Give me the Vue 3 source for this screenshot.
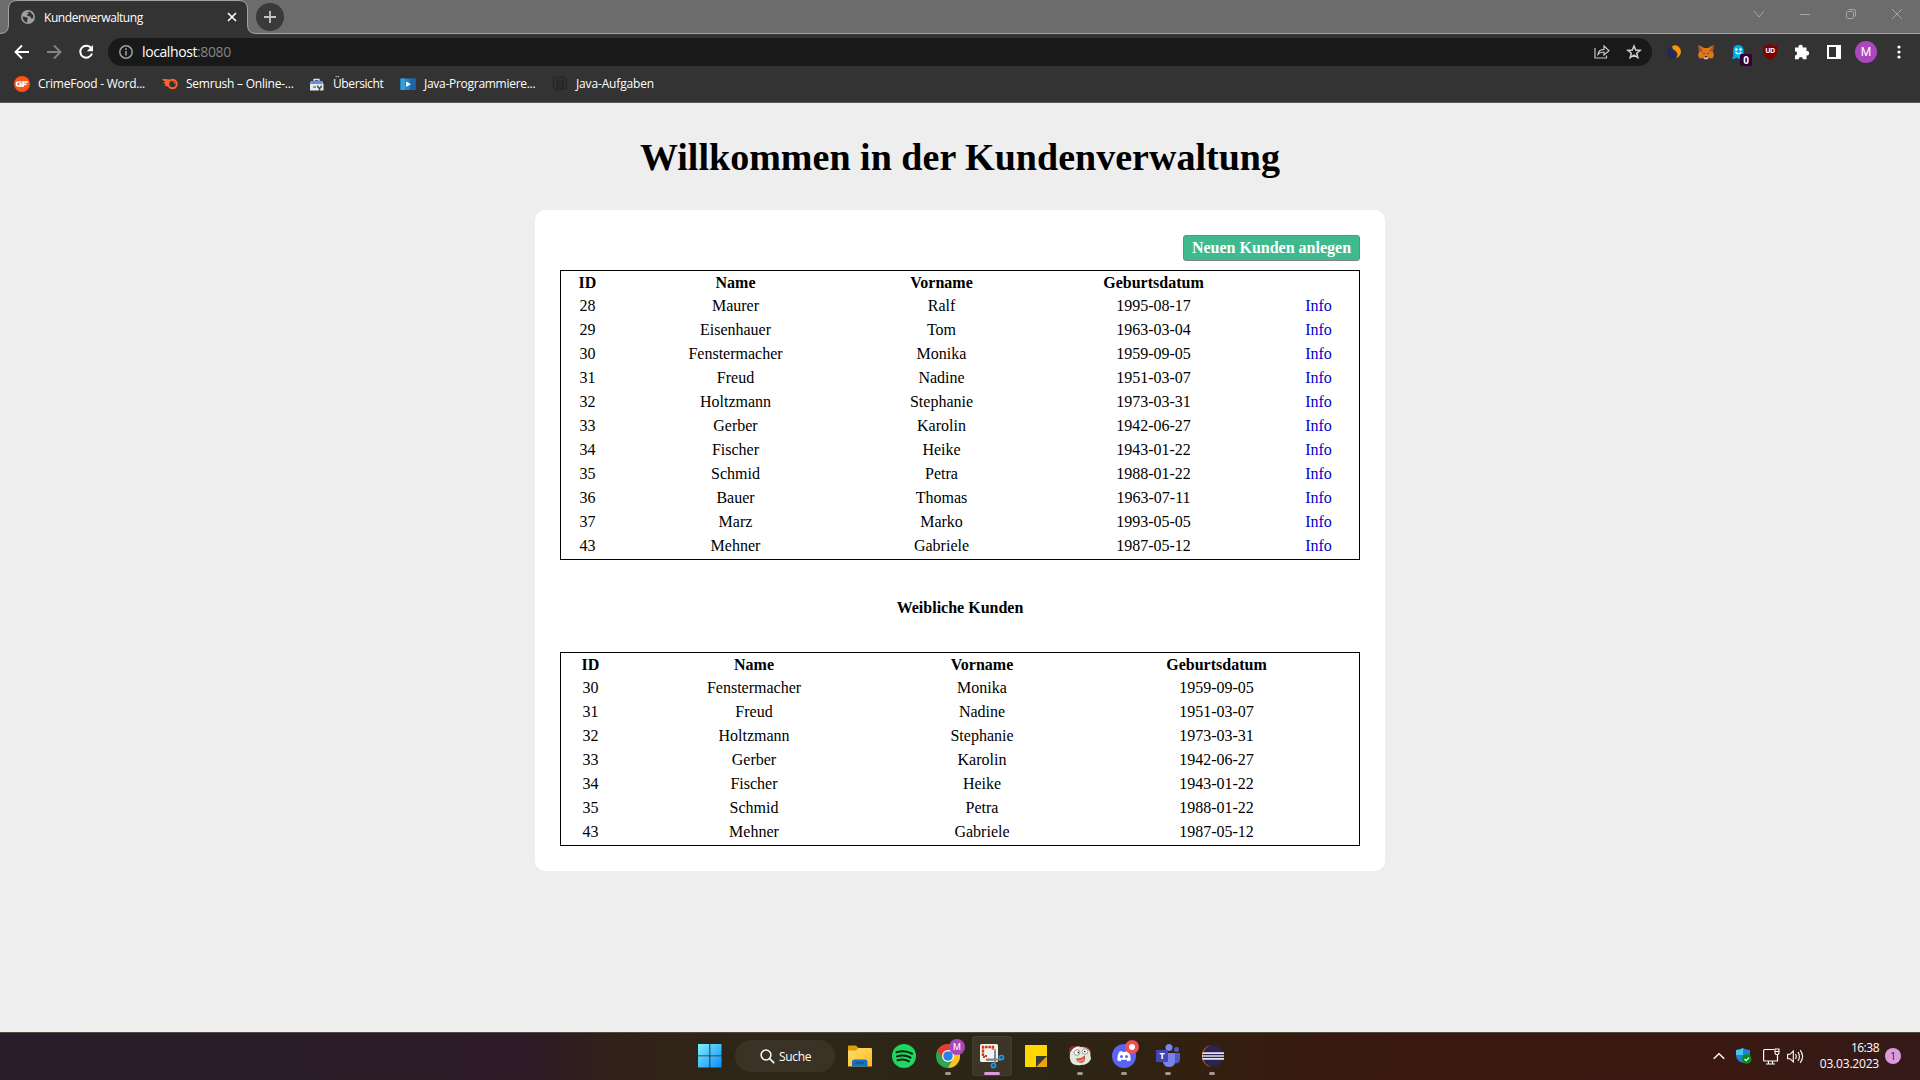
<script setup>
const bookmarks = [
  { id: 'crime', text: 'CrimeFood - Word...' },
  { id: 'sem', text: 'Semrush – Online-...' },
  { id: 'over', text: 'Übersicht' },
  { id: 'prog', text: 'Java-Programmiere...' },
  { id: 'task', text: 'Java-Aufgaben' },
]
const customers = [
  [28, 'Maurer', 'Ralf', '1995-08-17'],
  [29, 'Eisenhauer', 'Tom', '1963-03-04'],
  [30, 'Fenstermacher', 'Monika', '1959-09-05'],
  [31, 'Freud', 'Nadine', '1951-03-07'],
  [32, 'Holtzmann', 'Stephanie', '1973-03-31'],
  [33, 'Gerber', 'Karolin', '1942-06-27'],
  [34, 'Fischer', 'Heike', '1943-01-22'],
  [35, 'Schmid', 'Petra', '1988-01-22'],
  [36, 'Bauer', 'Thomas', '1963-07-11'],
  [37, 'Marz', 'Marko', '1993-05-05'],
  [43, 'Mehner', 'Gabriele', '1987-05-12'],
]
const femaleIds = [30, 31, 32, 33, 34, 35, 43]
const female = customers.filter((c) => femaleIds.includes(c[0]))
</script>

<template>
  <div class="screen">
    <header class="browser">
      <div class="tabstrip">
        <svg class="tabshape" width="256" height="34" viewBox="0 0 256 34">
          <path d="M0 34V33.500Q8.500 33.500 8.500 25V9Q8.500 .5 17 .5H239Q247.500 .5 247.500 9V25Q247.500 33.500 256 33.500V34Z" fill="#333" />
          <path d="M0 33.500Q8.500 33.500 8.500 25V9Q8.500 .5 17 .5H239Q247.500 .5 247.500 9V25Q247.500 33.500 256 33.500" fill="none" stroke="#a2a4a3" />
        </svg>
        <div class="tab">
          <svg width="14" height="14" viewBox="0 0 14 14">
            <circle cx="7" cy="7" r="7" fill="#9aa0a6" />
            <path d="M1.500 6.500 5 7 7 8.500 6 10 6.500 12.500Q2 12 1.500 6.500ZM6 2 9 1.800 12 5 12.500 8 10 8.500 9.500 6.500 6.500 6 6 4.500 8 3.500Z" fill="#333" />
          </svg>
          <span class="tabtitle">Kundenverwaltung</span>
          <svg width="10" height="10" viewBox="0 0 10 10"><path d="m1 1 8 8M9 1 1 9" stroke="#fff" stroke-width="1.600" /></svg>
        </div>
        <div class="newtab">
          <svg width="12" height="12" viewBox="0 0 12 12"><path d="M6 0V12M0 6H12" stroke="#c4c4c4" stroke-width="1.800" /></svg>
        </div>
        <div class="winctl">
          <svg width="12" height="12" viewBox="0 0 12 12"><path d="m1 3 5 6 5-6" fill="none" stroke="#a6a6a6" /></svg>
          <svg width="12" height="12" viewBox="0 0 12 12"><path d="M1 6.500H11" stroke="#a6a6a6" /></svg>
          <svg width="12" height="12" viewBox="0 0 12 12"><path d="M1.500 4.500Q1.500 3.500 2.500 3.500H7.500Q8.500 3.500 8.500 4.500V9.500Q8.500 10.500 7.500 10.500H2.500Q1.500 10.500 1.500 9.500ZM3.500 1.500H9Q10.500 1.500 10.500 3V8.500" fill="none" stroke="#a6a6a6" /></svg>
          <svg width="12" height="12" viewBox="0 0 12 12"><path d="m1 1 10 10M11 1 1 11" stroke="#a6a6a6" /></svg>
        </div>
      </div>
      <div class="toolbar">
        <div class="nav">
          <svg width="16" height="16" viewBox="0 0 16 16"><path d="M15 8H2M8 1.500 1.500 8 8 14.500" fill="none" stroke="#fff" stroke-width="1.900" /></svg>
          <svg width="16" height="16" viewBox="0 0 16 16"><path d="M1 8H14M8 1.500 14.500 8 8 14.500" fill="none" stroke="#858585" stroke-width="1.900" /></svg>
          <svg width="16" height="16" viewBox="0 0 16 16"><path d="M13.200 4.200A6 6 0 1 0 14 9.500" fill="none" stroke="#fff" stroke-width="2" /><path d="M15 1V7.200H8.800Z" fill="#fff" /></svg>
        </div>
        <div class="omnibox">
          <svg width="14" height="14" viewBox="0 0 14 14"><circle cx="7" cy="7" r="6.200" fill="none" stroke="#9aa0a6" stroke-width="1.500" /><path d="M7 6V10.600M7 3.300V4.900" stroke="#9aa0a6" stroke-width="1.600" /></svg>
          <span class="url">localhost<i>:8080</i></span>
          <svg class="share" width="16" height="16" viewBox="0 0 16 16"><path d="M1 4V14H12.500V11.500M4 10.500Q4.500 5.500 10 5.300V2L15 6.700 10 11V8Q6 8 4 10.500Z" fill="none" stroke="#c4c4c4" stroke-width="1.200" /></svg>
          <svg width="16" height="16" viewBox="0 0 16 16"><path d="M8 2 9.700 6.100 14.100 6.400 10.700 9.300 11.800 13.600 8 11.200 4.200 13.600 5.300 9.300 1.900 6.400 6.300 6.100Z" fill="none" stroke="#d0d0d0" stroke-width="1.500" /></svg>
        </div>
        <div class="ext">
          <svg width="16" height="16" viewBox="0 0 16 16"><path d="M6 2A7 7 0 0 0 9.500 13.500Q8 15 5 13.800A6.500 6.500 0 0 1 6 2Z" fill="#1f2a5c" /><path d="M3 3Q6 6 8 8T8.500 13.800Q2 14.500 1.300 9 1 5 3 3Z" fill="#1f2a5c" /><path d="M6 2.500Q9 0 12.500 2.500 16 6 14.500 10 13 13.500 10 14 13.500 9 9 6.500 6 4.500 6 2.500Z" fill="#ff9500" /></svg>
          <svg width="16" height="16" viewBox="0 0 16 16"><path d="M.5 1 6 4H10L15.500 1 15 8 16 11 14.500 14.500 11 14 9.500 15.500H6.500L5 14 1.500 14.500 0 11 1 8Z" fill="#e2761b" /><path d="m.5 1 4.500 6L1 8ZM15.500 1 11 7l4 1Z" fill="#a85420" /><path d="M6.500 12.500H9.500L9.800 15H6.200Z" fill="#d7c1b3" /><path d="m4 8.500 2.500.5.300 1.300ZM12 8.500 9.500 9l-.3 1.300Z" fill="#243447" /><path d="M6.800 12H9.200V13.200H6.800Z" fill="#222" /></svg>
          <div class="ghost">
            <svg width="16" height="16" viewBox="0 0 16 16"><path d="M2 15Q4 13 3 7 3 1 8 1 13.500 1 13.500 7V15L11 13.500 9 15 6.500 13.500 4 15Z" fill="#00aef0" /><circle cx="6.300" cy="5.500" r="1.200" fill="#fff" /><circle cx="10.500" cy="5.500" r="1.200" fill="#fff" /><path d="M5.500 8Q8.400 11.500 11.300 8" fill="none" stroke="#fff" stroke-width="1.200" /></svg>
            <b>0</b>
          </div>
          <div class="ublock">
            <svg width="16" height="16" viewBox="0 0 16 16"><path d="M8 0Q11 2 15 2V7Q15 13 8 16 1 13 1 7V2Q5 2 8 0Z" fill="#800000" /></svg>
            <b>UD</b>
          </div>
          <svg width="16" height="16" viewBox="0 0 16 16"><path d="M1 3.500H4.500A2.200 2.200 0 1 1 8.700 3.500H12.500V7A2.200 2.200 0 1 1 12.500 11.300V15.200H8.900A2.100 2.100 0 0 0 4.700 15.200H1V11.500A2.100 2.100 0 0 0 1 7.300Z" fill="#fff" /></svg>
          <svg width="16" height="16" viewBox="0 0 16 16"><path d="M1 1H15V15H1ZM3 3V13H10V3Z" fill="#fff" fill-rule="evenodd" /></svg>
          <div class="avatar">M</div>
          <svg class="dots" width="4" height="14" viewBox="0 0 4 14"><g fill="#fff"><circle cx="2" cy="2" r="1.600" /><circle cx="2" cy="7" r="1.600" /><circle cx="2" cy="12" r="1.600" /></g></svg>
        </div>
      </div>
      <nav class="bookmarks">
        <a v-for="b in bookmarks" :key="b.id" :class="'bm ' + b.id">
          <svg v-if="b.id === 'crime'" width="16" height="16" viewBox="0 0 16 16"><circle cx="8" cy="8" r="8" fill="#ff5417" /><path d="M7.500 6H4Q2.500 6 2.500 8T4 10.200H7V8.200H5M9 11V8.300H12.500M9 8V6H14" fill="none" stroke="#fff" stroke-width="1.700" /></svg>
          <svg v-else-if="b.id === 'sem'" width="16" height="16" viewBox="0 0 16 16"><path d="M0 3Q6 2.500 9 4L7 6 8 9 6 10.500Q3 10 2 9L4 8.500 1 6.500 4 6Q1 5 0 3Z" fill="#ff642d" /><circle cx="10.500" cy="8" r="4.200" fill="#333" stroke="#ff642d" stroke-width="2" /><path d="M10.500 5.500Q13 5.500 13 8" fill="none" stroke="#ff642d" stroke-width="1" /></svg>
          <svg v-else-if="b.id === 'over'" width="16" height="16" viewBox="0 0 16 16"><path d="M5 5V3.500H10V5" fill="none" stroke="#dfe3e8" stroke-width="1.300" /><path d="M2 5H13L14.500 8.500V14.500H1V8.500Z" fill="#e8eaed" /><path d="M2.500 5H12.500L13.500 8H1.500Z" fill="#5690f5" /><path d="M4 11H7" stroke="#555" stroke-width="1.200" /><path d="M8.800 9.500V11L10.500 12.500 12.200 11V9.500M10.500 12.500V15" fill="none" stroke="#444" stroke-width="1.400" /></svg>
          <svg v-else-if="b.id === 'prog'" width="16" height="16" viewBox="0 0 16 16"><path d="M.5 2.500H15.500V14H.5Z" fill="#2185c9" /><path d="M.5 2.500H5V14H.5Z" fill="#2fa2dd" /><path d="M10 2.500H15.500V14H10Z" fill="#1a65a8" /><path d="M6 5.500V11L11 8.200Z" fill="#fff" /></svg>
          <svg v-else width="16" height="16" viewBox="0 0 16 16"><path d="M1.500 1.500 11 1 14.500 3.500V12L5 14.500 1.500 11ZM4.500 4H11.500V11.500L5.500 12ZM7 6H10V9.500H7Z" fill="none" stroke="#242424" stroke-width="1.200" /></svg>
          <span>{{ b.text }}</span>
        </a>
      </nav>
    </header>

    <main class="page">
      <h1>Willkommen in der Kundenverwaltung</h1>
      <section class="card">
        <button class="new">Neuen Kunden anlegen</button>
        <table>
          <colgroup><col class="a1"><col class="a2"><col class="a3"><col class="a4"><col class="a5"></colgroup>
          <thead><tr><th>ID</th><th>Name</th><th>Vorname</th><th>Geburtsdatum</th><th></th></tr></thead>
          <tbody>
            <tr v-for="c in customers" :key="c[0]"><td v-for="(v, i) in c" :key="i">{{ v }}</td><td class="link"><a href="#">Info</a></td></tr>
          </tbody>
        </table>
        <h4>Weibliche Kunden</h4>
        <table>
          <colgroup><col class="f1"><col class="f2"><col class="f3"><col class="f4"></colgroup>
          <thead><tr><th>ID</th><th>Name</th><th>Vorname</th><th class="last">Geburtsdatum</th></tr></thead>
          <tbody>
            <tr v-for="c in female" :key="c[0]"><td v-for="(v, i) in c" :key="i" :class="{ last: i === 3 }">{{ v }}</td></tr>
          </tbody>
        </table>
      </section>
    </main>

    <footer class="taskbar">
      <div class="side"></div>
      <div class="apps">
        <div class="app start">
          <svg width="24" height="24" viewBox="0 0 24 24"><defs><linearGradient id="win" x1="0" y1="0" x2="1" y2="1"><stop offset="0" stop-color="#7df0ff" /><stop offset="1" stop-color="#0a8df5" /></linearGradient></defs><path d="M0 0H11.400V11.400H0ZM12.300 0H23.500V11.400H12.300ZM0 12.300H11.400V23.500H0ZM12.300 12.300H23.500V23.500H12.300Z" fill="url(#win)" /></svg>
        </div>
        <div class="search">
          <svg width="15" height="15" viewBox="0 0 15 15"><circle cx="6" cy="6" r="4.900" fill="none" stroke="#fff" stroke-width="1.500" /><path d="m9.500 9.500 4.700 4.700" stroke="#fff" stroke-width="1.700" /></svg>
          <span>Suche</span>
        </div>
        <div class="app">
          <svg width="24" height="24" viewBox="0 0 24 24"><defs><linearGradient id="fold" x1="0" y1="0" x2="1" y2="1"><stop offset="0" stop-color="#ffdc6b" /><stop offset="1" stop-color="#fdbc22" /></linearGradient></defs><path d="M0 2.500Q0 1.500 1 1.500H8L10.500 4H22V9H0Z" fill="#e29b0a" /><path d="M0 6.500H8L10.500 4H23Q24 4 24 5V22.500H0Z" fill="url(#fold)" /><path d="M4 22.500V18Q4 15.500 6.500 15.500H17Q19.500 15.500 19.500 18V22.500Z" fill="#1272c4" /><path d="M7.500 18.800H16" stroke="#0b4f95" stroke-width="1.300" /></svg>
        </div>
        <div class="app">
          <svg width="24" height="24" viewBox="0 0 24 24"><circle cx="12" cy="12" r="12" fill="#1ed760" /><path d="M4.500 8.200Q13 5.700 20 9.700M5 12.400Q12.500 10.200 18.600 13.600M5.500 16.300Q12 14.500 17 17.300" fill="none" stroke="#15210f" stroke-width="2" stroke-linecap="round" /></svg>
        </div>
        <div class="app">
          <svg width="24" height="24" viewBox="0 0 24 24"><circle cx="12" cy="12" r="12" fill="#2ea64b" /><path d="M1.600 6A12 12 0 0 1 22.400 6L12 6 7 15Z" fill="#e63b32" /><path d="M22.400 6A12 12 0 0 1 12 24L17.200 14.800 12 6Z" fill="#fcc31c" /><circle cx="12" cy="12" r="6" fill="#fff" /><circle cx="12" cy="12" r="4.800" fill="#2f7de8" /></svg>
          <em class="profile">M</em><u></u>
        </div>
        <div class="app active">
          <svg width="26" height="26" viewBox="0 0 26 26"><rect x="1" y="1" width="18" height="18" rx="1.500" fill="#f1f3f5" /><path d="M4 13V4H14V7" fill="none" stroke="#d83b01" stroke-width="2.400" stroke-dasharray="2.800 .8" /><path d="M4 14H6M6 13H8" stroke="#d83b01" stroke-width="2" /><path d="M16 6V17H7" fill="none" stroke="#9aa1a8" stroke-width="2" /><path d="M16 8V20M7 16.500H22" stroke="#7c858e" stroke-width="1.800" /><circle cx="22.500" cy="14.500" r="2" fill="#333" stroke="#1b9de2" stroke-width="1.700" /><circle cx="14.500" cy="22.500" r="2" fill="#333" stroke="#1b9de2" stroke-width="1.700" /></svg>
          <u class="wide"></u>
        </div>
        <div class="app">
          <svg width="22" height="22" viewBox="0 0 22 22"><path d="M0 0H22V11L11 22H0Z" fill="#ffd800" /><path d="M11 22 22 11V22Z" fill="#f0a30a" /><path d="M11 11H22L11 22Z" fill="#3b3b3b" /></svg>
        </div>
        <div class="app">
          <svg width="24" height="24" viewBox="0 0 24 24"><path d="M1 9Q0 3 5 2L20 3Q24 6 23 10Z" fill="#8e2d22" /><path d="M2 9Q4 3 12 3 20 3 22 8L23 15Q20 21 13 21 6 22 3 18 1 14 2 9Z" fill="#dfeadc" /><path d="M4 7Q6 2 12 2.500L7 7Z" fill="#fff" /><circle cx="9" cy="8.500" r="2.800" fill="#fff" stroke="#8b807a" stroke-width=".8" /><circle cx="17" cy="7.500" r="2.800" fill="#fff" stroke="#8b807a" stroke-width=".8" /><path d="M9.500 8.500H11M16 7.500H17.500" stroke="#333" stroke-width="1.500" /><path d="M8 14.500Q13 15 17 11.500 18 18 13 19 9 18.500 8 14.500Z" fill="#d94843" /><path d="M10 16.500Q13 18 15.500 15" fill="none" stroke="#f39a90" stroke-width="1.500" /></svg>
          <u></u>
        </div>
        <div class="app">
          <svg width="24" height="24" viewBox="0 0 24 24"><circle cx="12" cy="12" r="12" fill="#5865f2" /><path d="M7.500 7.500 10 7 10.500 8H13.500L14 7 16.500 7.500Q19 11 18.800 16 17 17.300 15.500 17.200L14.500 15.800H9.500L8.500 17.200Q7 17.300 5.200 16 5 11 7.500 7.500Z" fill="#fff" /><circle cx="9.500" cy="12.500" r="1.500" fill="#5865f2" /><circle cx="14.500" cy="12.500" r="1.500" fill="#5865f2" /></svg>
          <em class="alert"></em><u></u>
        </div>
        <div class="app teams">
          <svg width="24" height="24" viewBox="0 0 24 24"><circle cx="20.500" cy="5.500" r="2.500" fill="#5059c9" /><circle cx="13" cy="3.500" r="3.500" fill="#7b83eb" /><path d="M16 9H24V15Q24 19 20 19.500L16 19Z" fill="#5059c9" /><path d="M8 9H19V17Q19 23 13 23 8 23 7 18Z" fill="#7b83eb" /><rect y="6" width="12" height="12" rx="1" fill="#4048b5" /></svg>
          <b>T</b><u></u>
        </div>
        <div class="app">
          <svg width="24" height="24" viewBox="0 0 24 24"><path d="M11 1A11.200 11.200 0 0 0 11 23Q3 20 3 12T11 1Z" fill="#f7941e" /><circle cx="13" cy="12" r="10.500" fill="#2c2255" /><path d="M2.500 9.200H24M2 12H24M2.500 14.800H24" stroke="#e5e5ee" stroke-width="1.700" /></svg>
          <u></u>
        </div>
      </div>
      <div class="side tray">
        <svg width="12" height="8" viewBox="0 0 12 8"><path d="m.7 6.700 5.300-5 5.300 5" fill="none" stroke="#fff" stroke-width="1.400" /></svg>
        <svg class="shield" width="16" height="16" viewBox="0 0 16 16"><path d="M7 0Q10 2 14 2V7Q14 13 7 15 0 13 0 7V2Q4 2 7 0Z" fill="#1786d8" /><path d="M7 0V7H0V2Q4 2 7 0Z" fill="#49c3f2" /><circle cx="10.700" cy="11" r="4.800" fill="#0d8a1c" /><path d="m8.500 11 1.600 1.600 3-3" fill="none" stroke="#fff" stroke-width="1.200" /></svg>
        <svg class="net" width="17" height="17" viewBox="0 0 17 17"><path d="M11 1.500H1.500Q.6 1.500 .6 2.500V12Q.6 13 1.500 13H14.500V8M5.500 13V16M9.500 13V16M3 16H12" fill="none" stroke="#fff" stroke-width="1.200" /><path d="M12 1H16V5L15 6.500H13L12 5ZM12 3.500H16M14.500 6V9" fill="none" stroke="#fff" stroke-width="1.100" /></svg>
        <svg class="vol" width="17" height="15" viewBox="0 0 17 15"><path d="M.6 5.300H3L6.300 2V13L3 9.700H.6Z" fill="none" stroke="#fff" stroke-width="1.100" /><path d="M8.500 5Q10 7.500 8.500 10M11 3Q13.800 7.500 11 12M13.200 1.200Q18 7.500 13.200 13.800" fill="none" stroke="#fff" stroke-width="1.100" /></svg>
        <div class="clock"><span class="time">16:38</span><span>03.03.2023</span></div>
        <div class="count">1</div>
      </div>
    </footer>
  </div>
</template>

<style>
body { margin: 0; overflow: hidden; }
</style>

<style scoped>
* { box-sizing: border-box; }
svg { display: block; flex: none; }
.screen { width: 1920px; height: 1080px; display: flex; flex-direction: column; background: #eee; font: 12px "Open Sans", sans-serif; color: #fff; overflow: hidden; }
.browser { height: 103px; background: #333; border-bottom: 1px solid #5c5c5c; flex: none; }
.tabstrip { height: 34px; background: #6c6c6c; display: flex; align-items: flex-start; position: relative; box-shadow: inset 0 -1px #a2a4a3; }
.tabshape { position: absolute; left: 0; top: 0; }
.tab { position: relative; width: 256px; height: 34px; display: flex; align-items: center; padding: 0 19px 0 21px; }
.tabtitle { flex: 1; margin-left: 9px; letter-spacing: -0.43px; white-space: nowrap; }
.newtab { width: 28px; height: 28px; margin-top: 3px; border-radius: 50%; background: #3a3a3a; display: flex; align-items: center; justify-content: center; }
.winctl { display: flex; gap: 34px; margin-left: auto; margin-right: 17px; padding-top: 8px; }
.toolbar { height: 36px; display: flex; align-items: center; }
.nav { display: flex; gap: 16px; padding-left: 14px; width: 108px; }
.omnibox { width: 1544px; height: 28px; border-radius: 14px; background: #191919; display: flex; align-items: center; padding: 0 10px 0 11px; }
.url { margin-left: 9px; font-size: 14px; letter-spacing: -0.4px; line-height: 20px; }
.url i { font-style: normal; color: #858585; }
.share { margin-left: auto; margin-right: 16px; }
.ext { flex: 1; display: flex; align-items: center; gap: 16px; padding-left: 14px; }
.ghost, .ublock { position: relative; }
.ghost b { position: absolute; left: 10px; top: 10px; width: 12px; height: 12px; border-radius: 2px; background: #320033; font-size: 10px; line-height: 12px; text-align: center; }
.ublock b { position: absolute; left: 0; top: 0; width: 16px; font-size: 7px; line-height: 14px; letter-spacing: -0.4px; text-align: center; }
.avatar { width: 22px; height: 22px; margin-left: -3px; border-radius: 50%; background: #ab47bc; text-align: center; line-height: 22px; font-family: Roboto, sans-serif; font-size: 12px; }
.dots { margin-left: 4px; }
.bookmarks { height: 32px; display: flex; align-items: center; padding: 0 14px; margin-top: -2px; }
.bm { display: flex; align-items: center; white-space: nowrap; height: 24px; }
.bm span { margin-left: 8px; margin-top: -1px; letter-spacing: -0.23px; }
.bm.crime { width: 148px; }
.bm.sem { width: 147px; }
.bm.over { width: 91px; }
.bm.over span { letter-spacing: -0.4px; }
.bm.prog { width: 152px; }
.bm.prog span { letter-spacing: -0.28px; }
.bm.task span { letter-spacing: -0.15px; }
.page { height: 929px; flex: none; display: flex; flex-direction: column; align-items: center; font-family: "Liberation Serif", serif; font-size: 16px; color: #000; }
h1 { margin: 31px 0 30px; font-size: 38px; line-height: 46px; letter-spacing: 0.02px; white-space: nowrap; }
.card { width: 850px; height: 661px; border-radius: 10px; background: #fff; padding: 25px; }
.new { display: block; margin: 0 0 9px auto; width: 177px; height: 26px; border: 1px solid #808080; border-radius: 3px; background: #3dbb8f; color: #fff; font: bold 16px/22px "Liberation Serif", serif; padding: 0; white-space: nowrap; }
table { width: 800px; border: 1px solid #000; border-spacing: 0; table-layout: fixed; padding-bottom: 1px; text-align: center; }
th, td { padding: 0; line-height: 18px; height: 24px; }
th { height: 23px; }
td a { color: #00c; text-decoration: none; }
.link { padding-right: 3px; }
.last { padding-right: 2px; }
.a1 { width: 53px; } .a2 { width: 243px; } .a3 { width: 169px; } .a4 { width: 255px; } .a5 { width: 78px; }
.f1 { width: 59px; } .f2 { width: 268px; } .f3 { width: 188px; } .f4 { width: 283px; }
h4 { margin: 0; height: 92px; line-height: 96px; font-size: 16px; text-align: center; }
.taskbar { height: 48px; flex: none; display: flex; border-top: 1px solid #514a44; background: linear-gradient(90deg, #271c28 0, #2a1c26 300px, #2d1b26 540px, #32201a 600px, #2f2516 700px, #2b2616 1040px, #33200f 1200px, #38190f 1330px, #3b1811 1700px, #341a18 1920px); }
.side { width: 688px; }
.apps { display: flex; align-items: center; width: 546px; padding-bottom: 1px; }
.app { width: 40px; height: 40px; margin-right: 4px; flex: none; position: relative; display: flex; align-items: center; justify-content: center; border-radius: 4px; }
.start { width: 44px; margin-right: 3px; }
.search { width: 100px; height: 32px; margin-right: 5px; border-radius: 16px; background: #3b3226; display: flex; align-items: center; padding-left: 25px; flex: none; }
.search span { margin-left: 4px; letter-spacing: -0.35px; }
.active { background: #3b3627; box-shadow: inset 0 0 0 1px #443e31; }
.app u { position: absolute; left: 17px; bottom: 1px; width: 6px; height: 3px; border-radius: 2px; background: #a09a93; }
.app u.wide { left: 12px; width: 16px; background: #dc9be0; }
.app em { position: absolute; font-style: normal; border-radius: 50%; }
.profile { left: 21px; top: 3px; width: 16px; height: 16px; background: #ab47bc; font: 9px/16px Roboto, sans-serif; text-align: center; }
.app .alert { left: 21px; top: 4px; width: 14px; height: 14px; background: #fff; border: 4px solid #ee5057; }
.teams b { position: absolute; left: 8px; top: 14px; width: 12px; text-align: center; font-size: 9px; line-height: 12px; }
.side.tray { flex: 1; display: flex; align-items: center; padding: 0 0 1px 479px; }
.clock { width: 75px; text-align: right; line-height: 16px; letter-spacing: -0.2px; display: flex; flex-direction: column; }
.time { letter-spacing: -0.5px; }
.count { width: 16px; height: 16px; margin-left: 6px; border-radius: 50%; background: #dc9be0; color: #26161e; text-align: center; font-size: 10px; line-height: 16px; }
.shield { margin-left: 11px; }
.net { margin-left: 11px; }
.vol { margin-left: 7px; }
</style>
